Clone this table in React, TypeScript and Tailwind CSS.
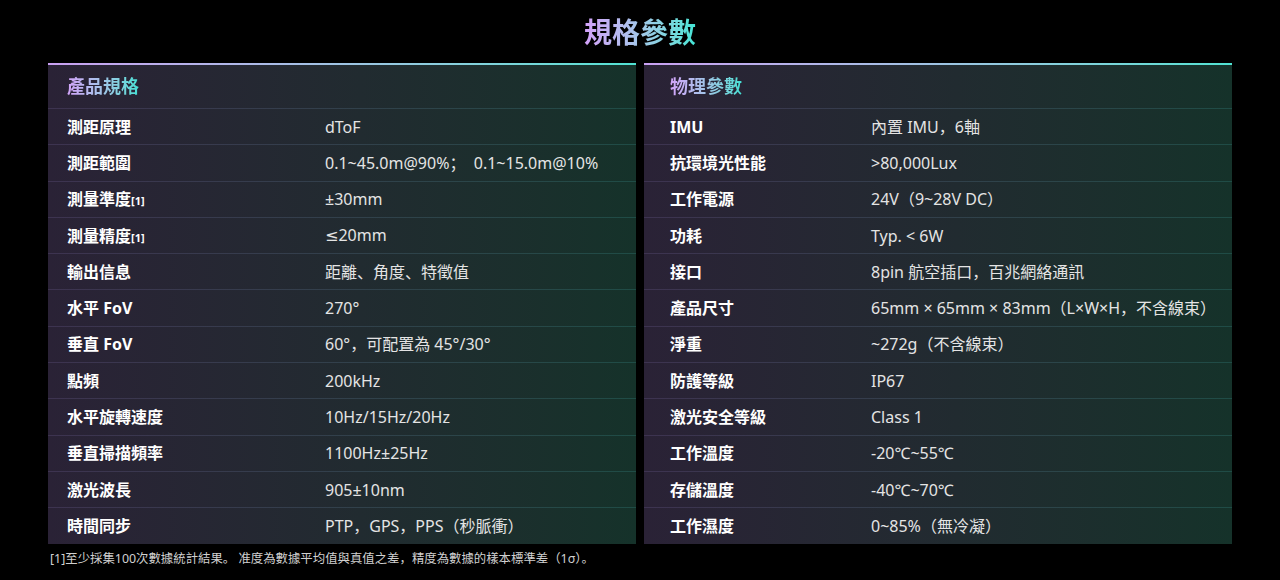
import type { ReactNode } from "react"

const FONT = { fontFamily: '"Noto Sans", "Noto Sans CJK SC", sans-serif' }

type Row = { label: string; note?: string; value: ReactNode }

const productSpecs: Row[] = [
  { label: "測距原理", value: "dToF" },
  { label: "測距範圍", value: "0.1~45.0m@90%；  0.1~15.0m@10%" },
  { label: "測量準度", note: "[1]", value: "±30mm" },
  {
    label: "測量精度",
    note: "[1]",
    value: (
      <>
        <span style={{ fontFamily: '"DejaVu Sans", sans-serif' }}>≤</span>20mm
      </>
    ),
  },
  { label: "輸出信息", value: "距離、角度、特徵值" },
  { label: "水平 FoV", value: "270°" },
  { label: "垂直 FoV", value: "60°，可配置為 45°/30°" },
  { label: "點頻", value: "200kHz" },
  { label: "水平旋轉速度", value: "10Hz/15Hz/20Hz" },
  { label: "垂直掃描頻率", value: "1100Hz±25Hz" },
  { label: "激光波長", value: "905±10nm" },
  { label: "時間同步", value: "PTP，GPS，PPS（秒脈衝）" },
]

const physicalSpecs: Row[] = [
  { label: "IMU", value: "內置 IMU，6軸" },
  { label: "抗環境光性能", value: ">80,000Lux" },
  { label: "工作電源", value: "24V（9~28V DC）" },
  { label: "功耗", value: "Typ. < 6W" },
  { label: "接口", value: "8pin 航空插口，百兆網絡通訊" },
  { label: "產品尺寸", value: "65mm × 65mm × 83mm（L×W×H，不含線束）" },
  { label: "淨重", value: "~272g（不含線束）" },
  { label: "防護等級", value: "IP67" },
  { label: "激光安全等級", value: "Class 1" },
  { label: "工作溫度", value: "-20℃~55℃" },
  { label: "存儲溫度", value: "-40℃~70℃" },
  { label: "工作濕度", value: "0~85%（無冷凝）" },
]

function Divider() {
  return <div className="h-px bg-gradient-to-r from-[#3d3350] to-[#1f4c46]" />
}

function SpecPanel({
  title,
  rows,
  labelPad,
  labelWidth,
}: {
  title: string
  rows: Row[]
  labelPad: string
  labelWidth: string
}) {
  return (
    <div className="w-[588px] shrink-0 overflow-hidden bg-gradient-to-r from-[#2a2236] to-[#15322a]">
      <div className="h-[2px] bg-gradient-to-r from-[#c9a0f2] to-[#4fe3d3]" />
      <div className={`h-[43px] flex items-center ${labelPad}`}>
        <span className="text-[18px] font-bold bg-gradient-to-r from-[#d2a4fa] to-[#3fe0d4] bg-clip-text text-transparent">
          {title}
        </span>
      </div>
      {rows.map((r) => (
        <div key={r.label}>
          <Divider />
          <div className={`h-[35.3px] flex items-center ${labelPad}`}>
            <div className={`${labelWidth} shrink-0 text-[16px] font-bold text-white`}>
              {r.label}
              {r.note && <span className="text-[11px]">{r.note}</span>}
            </div>
            <div className="text-[16px] text-[#e4e4e4] whitespace-pre">{r.value}</div>
          </div>
        </div>
      ))}
    </div>
  )
}

export default function App() {
  return (
    <div className="w-[1280px] h-[580px] bg-black overflow-hidden" style={FONT}>
      <div className="h-[63px] flex items-center justify-center">
        <h1 className="text-[28px] font-bold leading-none bg-gradient-to-r from-[#d4a2fa] to-[#3fe6d6] bg-clip-text text-transparent">
          規格參數
        </h1>
      </div>
      <div className="flex gap-2 px-12">
        <SpecPanel title="產品規格" rows={productSpecs} labelPad="pl-[19px]" labelWidth="w-[258px]" />
        <SpecPanel title="物理參數" rows={physicalSpecs} labelPad="pl-[26px]" labelWidth="w-[201px]" />
      </div>
      <p className="mt-[6px] pl-[50px] text-[12.4px] text-[#d0d0d0]">
        [1]至少採集100次數據統計結果。 准度為數據平均值與真值之差，精度為數據的樣本標準差（1σ）。
      </p>
    </div>
  )
}
